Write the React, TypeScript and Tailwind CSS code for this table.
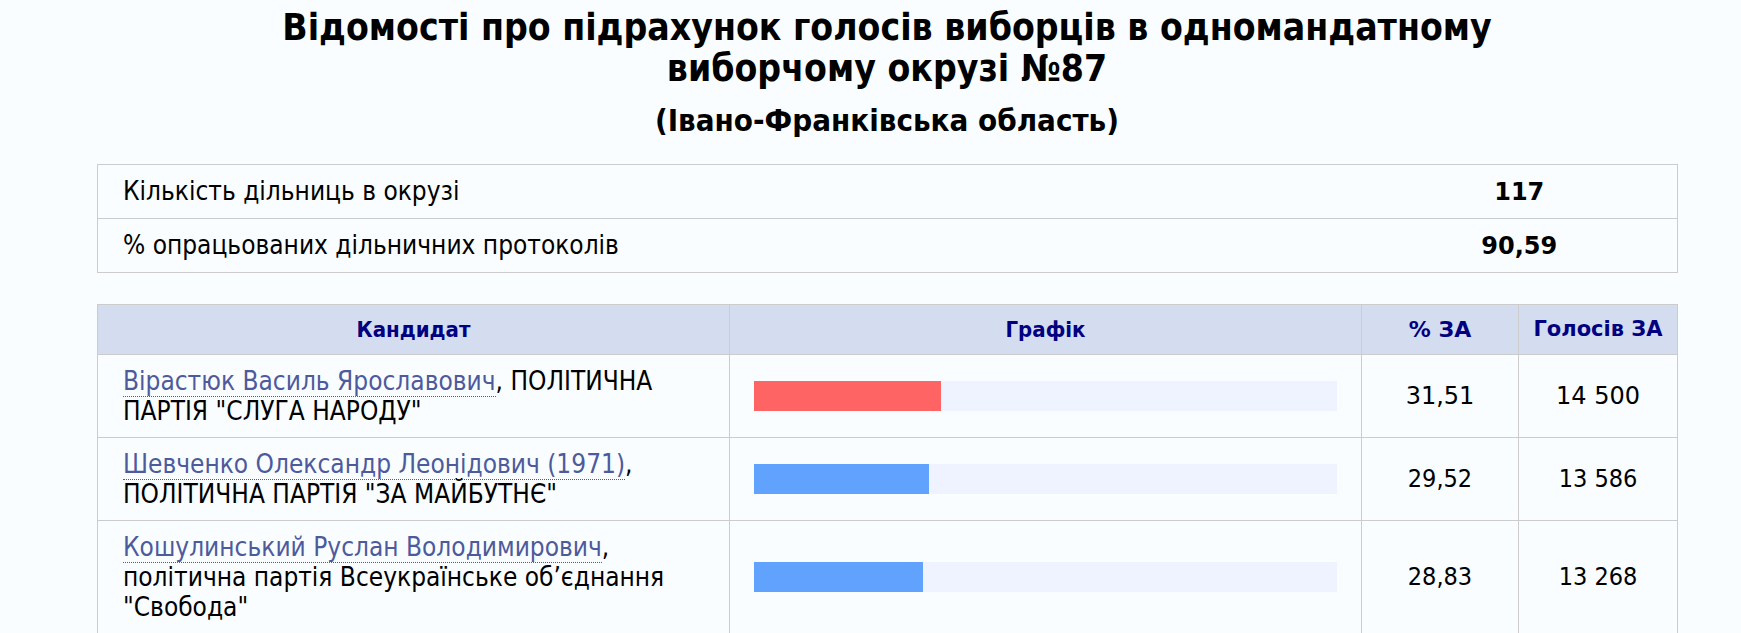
import React from "react";

type Cand = {
  name: string;
  lines: string[];
  pct: string;
  p: number;
  votes: string;
  bar: string;
  wide: boolean;
};

const candidates: Cand[] = [
  {
    name: "Вірастюк Василь Ярославович",
    lines: [", ПОЛІТИЧНА", 'ПАРТІЯ "СЛУГА НАРОДУ"'],
    pct: "31,51",
    p: 31.51,
    votes: "14 500",
    bar: "bg-[#ff6464]",
    wide: true,
  },
  {
    name: "Шевченко Олександр Леонідович (1971)",
    lines: [",", 'ПОЛІТИЧНА ПАРТІЯ "ЗА МАЙБУТНЄ"'],
    pct: "29,52",
    p: 29.52,
    votes: "13 586",
    bar: "bg-[#62a2ff]",
    wide: false,
  },
  {
    name: "Кошулинський Руслан Володимирович",
    lines: [",", "політична партія Всеукраїнське об’єднання", '"Свобода"'],
    pct: "28,83",
    p: 28.83,
    votes: "13 268",
    bar: "bg-[#62a2ff]",
    wide: false,
  },
];

export default function App() {
  return (
    <div className="min-h-[633px] bg-[#f9fdff] text-black font-['DejaVu_Sans_Condensed','Liberation_Sans_Narrow','DejaVu_Sans',sans-serif]">
      <div className="ml-[97px] w-[1580px] pt-[7px]">
        <h1 className="text-center font-bold text-[37px] leading-[41px] whitespace-nowrap">
          Відомості про підрахунок голосів виборців в одномандатному
          <br />
          виборчому окрузі №87
        </h1>
        <h2 className="mt-[14px] text-center font-bold text-[31px] leading-[34px]">
          (Івано-Франківська область)
        </h2>

        <table className="mt-[27px] w-[1580px] border-collapse table-fixed">
          <colgroup>
            <col className="w-[1264px]" />
            <col className="w-[316px]" />
          </colgroup>
          <tbody>
            <tr className="h-[54px]">
              <td className="border-y border-l border-[#cccccc] pl-[25px] text-[26px]">
                Кількість дільниць в окрузі
              </td>
              <td className="border-y border-r border-[#cccccc] text-center font-bold text-[24px] font-['DejaVu_Sans',sans-serif]">
                117
              </td>
            </tr>
            <tr className="h-[54px]">
              <td className="border-y border-l border-[#cccccc] pl-[25px] text-[26px]">
                % опрацьованих дільничних протоколів
              </td>
              <td className="border-y border-r border-[#cccccc] text-center font-bold text-[24px] font-['DejaVu_Sans',sans-serif]">
                90,59
              </td>
            </tr>
          </tbody>
        </table>

        <table className="mt-[31px] w-[1580px] border-collapse table-fixed">
          <colgroup>
            <col className="w-[632px]" />
            <col className="w-[632px]" />
            <col className="w-[157px]" />
            <col className="w-[159px]" />
          </colgroup>
          <thead>
            <tr className="h-[50px] bg-[#d4dcf0] text-[#000080]">
              <th className="border border-[#cccccc] font-bold text-[22px]">Кандидат</th>
              <th className="border border-[#cccccc] font-bold text-[22px]">Графік</th>
              <th className="border border-[#cccccc] font-bold text-[22px] font-['DejaVu_Sans',sans-serif]">
                % ЗА
              </th>
              <th className="border border-[#cccccc] font-bold text-[21px] font-['DejaVu_Sans',sans-serif]">
                Голосів ЗА
              </th>
            </tr>
          </thead>
          <tbody>
            {candidates.map((c) => (
              <tr key={c.name}>
                <td className="border border-[#cccccc] px-[25px] py-[11px] text-[26px] leading-[30px] align-middle whitespace-nowrap">
                  <span className="text-[#4d5a9c] border-b border-dotted border-[#4d5a9c]">
                    {c.name}
                  </span>
                  {c.lines.map((l, i) => (
                    <React.Fragment key={i}>
                      {i > 0 && <br />}
                      {l}
                    </React.Fragment>
                  ))}
                </td>
                <td className="border border-[#cccccc] px-[24px] align-middle">
                  <div className="h-[30px] w-full bg-[#eef3ff]">
                    <div
                      className={`h-full ${c.bar}`}
                      style={{ width: `${Math.ceil(c.p)}%` }}
                    />
                  </div>
                </td>
                <td
                  className={
                    c.wide
                      ? "border border-[#cccccc] text-center text-[24px] font-['DejaVu_Sans',sans-serif]"
                      : "border border-[#cccccc] text-center text-[25px]"
                  }
                >
                  {c.pct}
                </td>
                <td
                  className={
                    c.wide
                      ? "border border-[#cccccc] text-center text-[24px] font-['DejaVu_Sans',sans-serif]"
                      : "border border-[#cccccc] text-center text-[25px]"
                  }
                >
                  {c.votes}
                </td>
              </tr>
            ))}
          </tbody>
        </table>
      </div>
    </div>
  );
}
